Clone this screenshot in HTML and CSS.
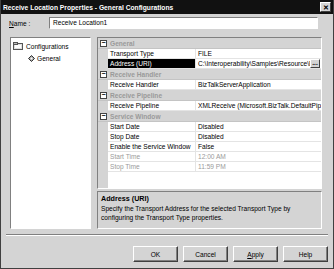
FILE: index.html
```html
<!DOCTYPE html>
<html lang="en">
<head>
    <meta charset="UTF-8">
    <title>Receive Location Properties - General Configurations</title>
    <link rel="stylesheet" href="styles.css">
</head>
<body>
    <div class="dialog">
        <div class="titlebar">
            <span class="title">Receive Location Properties - General Configurations</span>
            <span class="close">&#x2715;</span>
        </div>

        <div class="name-row">
            <label class="name-label"><u>N</u>ame :</label>
            <div class="name-input">Receive Location1</div>
        </div>

        <div class="main">
            <div class="tree">
                <div class="tree-item">
                    <svg class="folder" width="10" height="8" viewBox="0 0 10 8">
                        <rect x="0.5" y="1.5" width="9" height="6" fill="#e0e0e0" stroke="#555"/>
                        <rect x="0.5" y="0.5" width="4" height="2" fill="#bbb" stroke="#555"/>
                        <rect x="2" y="3" width="6" height="3" fill="#fff"/>
                    </svg>
                    <span>Configurations</span>
                </div>
                <div class="tree-item child">
                    <svg class="node" width="7" height="7" viewBox="0 0 7 7">
                        <path d="M3.5 0.5 L6.5 3.5 L3.5 6.5 L0.5 3.5 Z" fill="#999" stroke="#333"/>
                        <rect x="2.5" y="2.5" width="2" height="2" fill="#fff"/>
                    </svg>
                    <span>General</span>
                </div>
            </div>

            <div class="right">
                <div class="grid">
                    <div class="group">
                        <span class="toggle">&minus;</span><span class="group-name">General</span>
                    </div>
                    <div class="prop"><span class="key">Transport Type</span><span class="val">FILE</span></div>
                    <div class="prop selected">
                        <span class="key">Address (URI)</span>
                        <span class="val">C:\Interoperability\Samples\Resource\B<span class="dots">...</span></span>
                    </div>

                    <div class="group">
                        <span class="toggle">&minus;</span><span class="group-name">Receive Handler</span>
                    </div>
                    <div class="prop"><span class="key">Receive Handler</span><span class="val">BizTalkServerApplication</span></div>

                    <div class="group">
                        <span class="toggle">&minus;</span><span class="group-name">Receive Pipeline</span>
                    </div>
                    <div class="prop"><span class="key">Receive Pipeline</span><span class="val">XMLReceive (Microsoft.BizTalk.DefaultPipelines.XMLReceive)</span></div>

                    <div class="group">
                        <span class="toggle">&minus;</span><span class="group-name">Service Window</span>
                    </div>
                    <div class="prop"><span class="key">Start Date</span><span class="val">Disabled</span></div>
                    <div class="prop"><span class="key">Stop Date</span><span class="val">Disabled</span></div>
                    <div class="prop"><span class="key">Enable the Service Window</span><span class="val">False</span></div>
                    <div class="prop disabled"><span class="key">Start Time</span><span class="val">12:00 AM</span></div>
                    <div class="prop disabled"><span class="key">Stop Time</span><span class="val">11:59 PM</span></div>
                </div>

                <div class="desc">
                    <div class="desc-title">Address (URI)</div>
                    <p>Specify the Transport Address for the selected Transport Type by configuring the Transport Type properties.</p>
                </div>
            </div>
        </div>

        <div class="separator"></div>

        <div class="buttons">
            <button class="btn">OK</button>
            <button class="btn">Cancel</button>
            <button class="btn"><u>A</u>pply</button>
            <button class="btn">Help</button>
        </div>
    </div>
</body>
</html>
```

FILE: styles.css
```css
:root {
    --face: #d4d4d4;
    --shadow: #808080;
    --dark: #404040;
    --light: #ffffff;
    --text: #000000;
    --muted: #9a9a9a;
}

* {
    margin: 0;
    padding: 0;
    box-sizing: border-box;
}

body {
    font-family: 'Liberation Sans', Arial, sans-serif;
    font-size: 6.6px;
    color: var(--text);
    background: var(--face);
}

.dialog {
    width: 334px;
    height: 269px;
    background: var(--face);
    border: 1px solid var(--dark);
    border-top: none;
    display: flex;
    flex-direction: column;
}

.titlebar {
    height: 14px;
    background: #111111;
    color: #fff;
    display: flex;
    align-items: center;
    justify-content: space-between;
    padding: 0 2px;
}

.title {
    font-weight: 700;
    font-size: 6.7px;
}

.close {
    width: 11px;
    height: 10px;
    background: var(--face);
    color: #000;
    font-size: 7px;
    font-weight: 700;
    line-height: 9px;
    text-align: center;
    border: 1px solid;
    border-color: var(--light) var(--dark) var(--dark) var(--light);
}

.name-row {
    display: flex;
    align-items: center;
    padding: 3px 15px 0 8px;
    height: 15px;
}

.name-label {
    width: 40px;
}

.name-input {
    flex: 1;
    height: 12px;
    background: #fff;
    border: 1px solid;
    border-color: var(--shadow) var(--light) var(--light) var(--shadow);
    padding: 0 3px;
    line-height: 10px;
}

.main {
    display: flex;
    gap: 6px;
    margin-top: 8px;
    padding: 0 11px 0 9px;
    height: 192px;
}

.tree {
    width: 81px;
    flex-shrink: 0;
    background: #fff;
    border: 1px solid;
    border-color: var(--shadow) var(--light) var(--light) var(--shadow);
    padding: 3px 2px;
}

.tree-item {
    display: flex;
    align-items: center;
    gap: 3px;
    height: 10px;
    margin-bottom: 2px;
}

.tree-item.child {
    padding-left: 15px;
    gap: 2px;
}

.right {
    flex: 1;
    min-width: 0;
    display: flex;
    flex-direction: column;
    gap: 2px;
}

.grid {
    flex: 1;
    border: 1px solid;
    border-color: var(--shadow) var(--light) var(--light) var(--shadow);
    background: linear-gradient(to right, var(--face) 10px, #fff 10px);
    overflow: hidden;
}

.group {
    display: flex;
    align-items: center;
    height: 11px;
    background: var(--face);
    border-bottom: 1px solid #c4c4c4;
}

.toggle {
    width: 7px;
    height: 7px;
    margin: 0 2px;
    border: 1px solid #444;
    background: #fff;
    font-size: 7px;
    line-height: 4px;
    text-align: center;
    font-weight: 700;
}

.group-name {
    font-weight: 700;
    color: var(--muted);
    padding-left: 1px;
}

.prop {
    display: flex;
    height: 10px;
    margin-left: 10px;
    line-height: 9px;
    border-bottom: 1px solid #e4e4e4;
    white-space: nowrap;
    min-width: 0;
}

.key {
    width: 88px;
    flex-shrink: 0;
    padding-left: 2px;
    border-right: 1px solid #e4e4e4;
    overflow: hidden;
}

.val {
    flex: 1;
    min-width: 0;
    padding-left: 2px;
    overflow: hidden;
    position: relative;
}

.prop.selected .key {
    background: #000;
    color: #fff;
}

.dots {
    position: absolute;
    right: 1px;
    top: 0;
    width: 10px;
    height: 9px;
    background: var(--face);
    border: 1px solid;
    border-color: var(--light) var(--dark) var(--dark) var(--light);
    line-height: 5px;
    text-align: center;
    font-weight: 700;
}

.prop.disabled {
    color: var(--muted);
}

.desc {
    height: 38px;
    border: 1px solid;
    border-color: var(--shadow) var(--light) var(--light) var(--shadow);
    padding: 2px 3px;
    line-height: 9px;
}

.desc-title {
    font-weight: 700;
    font-size: 7.2px;
    margin-bottom: 1px;
}

.desc p {
    width: 205px;
}

.separator {
    margin: 5px 5px 0 5px;
    border-top: 1px solid var(--shadow);
    border-bottom: 1px solid var(--light);
}

.buttons {
    display: flex;
    justify-content: flex-end;
    gap: 5px;
    padding: 10px 5px 0 0;
}

.btn {
    width: 45px;
    height: 16px;
    font-family: 'Liberation Sans', Arial, sans-serif;
    font-size: 6.6px;
    background: var(--face);
    border: 1px solid;
    border-color: var(--light) var(--dark) var(--dark) var(--light);
    box-shadow: inset -1px -1px 0 var(--shadow);
}
```
